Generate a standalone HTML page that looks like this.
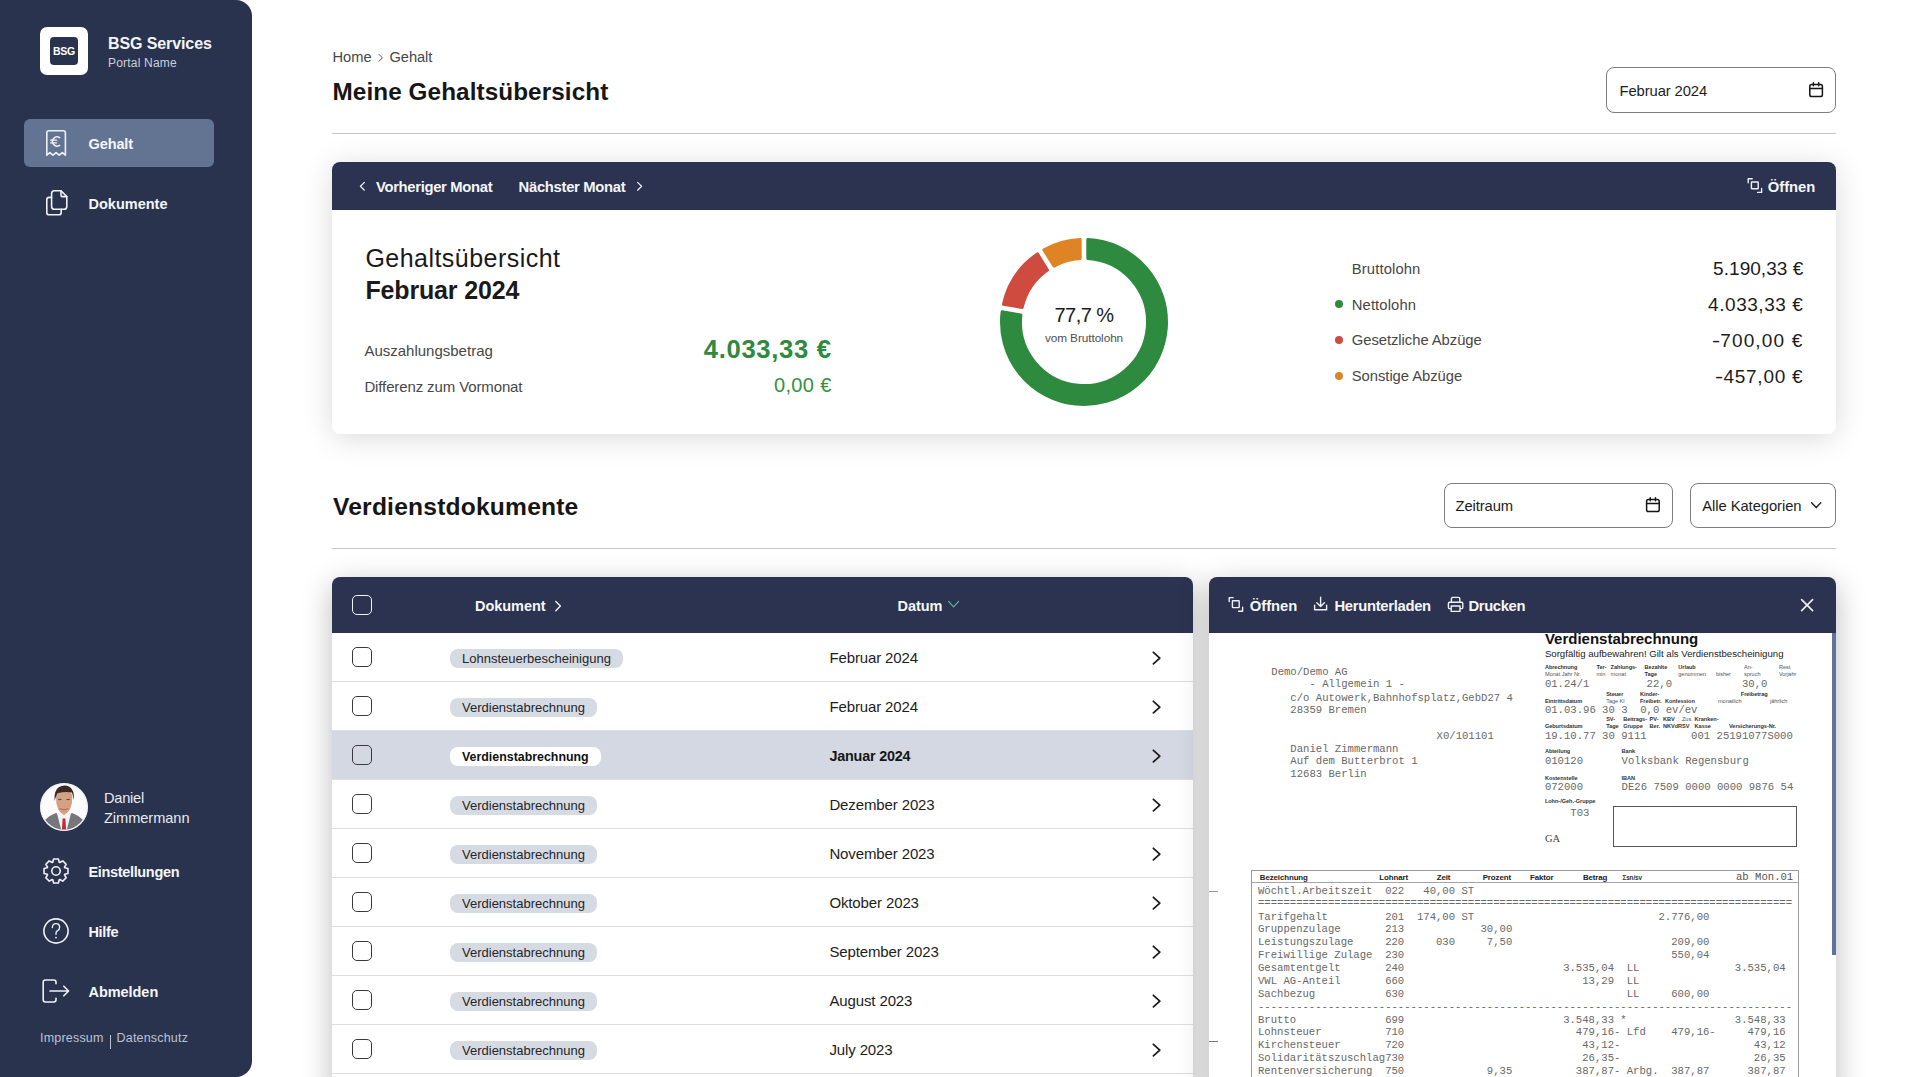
<!DOCTYPE html>
<html lang="de">
<head>
<meta charset="utf-8">
<title>Meine Gehaltsübersicht</title>
<style>
*{box-sizing:border-box;margin:0;padding:0}
html,body{width:1912px;height:1077px;overflow:hidden;background:#fff}
body{font-family:"Liberation Sans",sans-serif;position:relative;color:#1d1d1d}
.a{position:absolute;white-space:nowrap;line-height:1}
svg{position:absolute;overflow:visible}
#side{position:absolute;left:0;top:0;width:252px;height:1077px;background:#2a334e;border-radius:0 16px 16px 0}
.wt{color:#f2f4f8}
.nav{font-weight:700;font-size:14.5px;color:#f4f6fa}
.dark{background:#2b3350}
.card{position:absolute;background:#fff;border-radius:8px;box-shadow:0 4px 22px rgba(0,0,0,.09)}
.input{position:absolute;border:1px solid #7d7d7d;border-radius:8px;background:#fff}
.hr{position:absolute;height:1px;background:#c6c6c6}
.row{position:absolute;left:332px;width:861px;height:49px;border-bottom:1px solid #dedede;background:#fff}
.cb{position:absolute;width:20px;height:20px;border:1.5px solid #3a3a3a;border-radius:5px;background:#fff}
.badge{position:absolute;height:19px;border-radius:8px;background:#d6dae3;font-size:13px;line-height:19px;padding:0 12px;color:#262626}
.mono{font-family:"Liberation Mono",monospace;font-size:10.53px;color:#4a4a4a;white-space:pre;line-height:1;position:absolute}
.lbl{font-family:"Liberation Sans",sans-serif;font-weight:700;font-size:6px;color:#222;position:absolute;white-space:nowrap;line-height:1;letter-spacing:-.1px}
</style>
</head>
<body>
<!-- SIDEBAR -->
<div id="side"></div>
<div class="a" style="left:40px;top:27px;width:48px;height:48px;background:#fff;border-radius:7px"></div>
<div class="a" style="left:50px;top:37px;width:28px;height:28px;background:#2a334e;border-radius:4px;color:#fff;font-weight:700;font-size:10.5px;line-height:28px;text-align:center;letter-spacing:-.2px">BSG</div>
<div class="a wt" style="left:108px;top:36.1px;font-size:16px;font-weight:700;letter-spacing:-.1px">BSG Services</div>
<div class="a" style="left:108px;top:56.6px;font-size:12px;color:#c9d0dd;letter-spacing:.2px">Portal Name</div>

<div class="a" style="left:24px;top:119px;width:190px;height:48px;background:#637492;border-radius:6px"></div>
<div class="a nav" style="left:88.5px;top:136.7px;letter-spacing:-.1px">Gehalt</div>
<div class="a nav" style="left:88.5px;top:196.7px">Dokumente</div>


<!-- nav icons -->
<svg style="left:0;top:0" width="252" height="260" viewBox="0 0 252 260" fill="none" stroke="#eef1f6" stroke-width="1.6" stroke-linejoin="round" stroke-linecap="round">
  <path d="M46.8 155.2 V133 Q46.8 130.8 49 130.8 H63.2 Q65.4 130.8 65.4 133 V155.2 L62.3 152.6 L59.2 155.2 L56.1 152.6 L53 155.2 L49.9 152.6 Z"/>
  <path d="M59.6 137.6 A4.6 4.6 0 1 0 59.6 145.4" />
  <path d="M50.6 140.2 H56.6 M50.6 142.8 H56.6" stroke-width="1.3"/>
  <path d="M51.4 197.4 H49.2 Q46.8 197.4 46.8 199.8 V212.4 Q46.8 214.8 49.2 214.8 H58.8 Q61.2 214.8 61.2 212.4 V209.2" />
  <path d="M54.4 190.8 H61 L66.8 196.6 V206.4 Q66.8 209.2 64 209.2 H54.4 Q51.6 209.2 51.6 206.4 V193.6 Q51.6 190.8 54.4 190.8 Z"/>
  <path d="M61 190.8 V195.2 Q61 196.6 62.4 196.6 H66.8"/>
</svg>
<div class="a" style="left:40px;top:783px;width:48px;height:48px;border-radius:50%;background:#fff"></div>
<svg style="left:0;top:0" width="1" height="1">
  <defs><clipPath id="av"><circle cx="64" cy="807" r="22.6"/></clipPath></defs>
  <circle cx="64" cy="807" r="23.2" fill="none" stroke="#dfe4ee" stroke-width=".8"/>
  <g clip-path="url(#av)">
    <rect x="40" y="783" width="48" height="48" fill="#fbfbfb"/>
    <path d="M43 831 L45 820 Q49 815.5 56 813 L64 817 L72 813 Q79 815.5 83 820 L85 831 Z" fill="#77767a"/>
    <path d="M57 813.2 L61.5 831 H66.5 L71 813.2 L68 812 H60 Z" fill="#f4f2f2"/>
    <path d="M62.6 818.6 H65.4 L66.2 831 H61.8 Z" fill="#b8313a"/>
    <path d="M56 797 Q55.6 811 64 815 Q72.4 811 72.4 797 Q72 790 64 790 Q56 790 56 797 Z" fill="#d4a184"/>
    <path d="M54.6 801 Q53.4 786.5 64.4 785.6 Q75 786 73.8 800.5 Q72.8 794.4 71.8 792.6 Q66 791.4 57.4 793.2 Q56 796 54.6 801 Z" fill="#3a2a23"/>
    <path d="M59.8 808.6 Q64 811 68.2 808.6" fill="none" stroke="#9e6a55" stroke-width=".9"/>
    <path d="M58.2 799.6 H61.4 M66.6 799.6 H69.8" stroke="#5a3b2e" stroke-width="1"/>
  </g>
</svg>
<div class="a" style="left:104px;top:791.1px;font-size:14.6px;color:#e6eaf2;letter-spacing:-.25px">Daniel</div>
<div class="a" style="left:104px;top:811.1px;font-size:14.6px;color:#e6eaf2;letter-spacing:-.05px">Zimmermann</div>

<svg style="left:0;top:840" width="252" height="180" viewBox="0 840 252 180" fill="none" stroke="#eef1f6" stroke-width="1.6" stroke-linejoin="round" stroke-linecap="round">
  <path d="M64.70 867.72 L67.96 868.58 L67.96 873.42 L64.70 874.28 L64.47 874.84 L66.17 877.74 L62.74 881.17 L59.84 879.47 L59.28 879.70 L58.42 882.96 L53.58 882.96 L52.72 879.70 L52.16 879.47 L49.26 881.17 L45.83 877.74 L47.53 874.84 L47.30 874.28 L44.04 873.42 L44.04 868.58 L47.30 867.72 L47.53 867.16 L45.83 864.26 L49.26 860.83 L52.16 862.53 L52.72 862.30 L53.58 859.04 L58.42 859.04 L59.28 862.30 L59.84 862.53 L62.74 860.83 L66.17 864.26 L64.47 867.16 Z"/>
  <circle cx="56" cy="871" r="4.2"/>
  <circle cx="56" cy="931" r="12.1"/>
  <path d="M52.4 927.6 Q52.4 923.6 56 923.6 Q59.6 923.6 59.6 927.2 Q59.6 929.6 57.6 930.6 Q56 931.4 56 933.4 V934.2" stroke-width="1.4"/>
  <circle cx="56" cy="937.6" r=".9" fill="#eef1f6" stroke="none"/>
  <path d="M56 983.8 V982.2 Q56 980 53.8 980 H45.4 Q43.2 980 43.2 982.2 V999.8 Q43.2 1002 45.4 1002 H53.8 Q56 1002 56 999.8 V998.2"/>
  <path d="M50 991 H68.6 M63.8 986.2 L68.6 991 L63.8 995.8"/>
</svg>
<div class="a nav" style="left:88.5px;top:864.6px;letter-spacing:-.34px">Einstellungen</div>
<div class="a nav" style="left:88.5px;top:924.6px;letter-spacing:-.35px">Hilfe</div>
<div class="a nav" style="left:88.5px;top:984.6px;letter-spacing:-.05px">Abmelden</div>
<div class="a" style="left:40px;top:1032.4px;font-size:12.5px;color:#bcc3d2;letter-spacing:.2px">Impressum</div>
<div class="a" style="left:109.6px;top:1035px;width:1.2px;height:14px;background:#bcc3d2"></div>
<div class="a" style="left:116.6px;top:1032.4px;font-size:12.5px;color:#bcc3d2;letter-spacing:.18px">Datenschutz</div>


<!-- MAIN HEADER -->
<div class="a" style="left:332.5px;top:50.3px;font-size:14.7px;color:#474747">Home</div>
<svg style="left:0;top:0" width="1" height="1"><path d="M379 54.4 L382.4 57.8 L379 61.2" fill="none" stroke="#555" stroke-width="1" stroke-linecap="round" stroke-linejoin="round"/></svg>
<div class="a" style="left:389.4px;top:50.3px;font-size:14.7px;color:#474747;letter-spacing:-.05px">Gehalt</div>
<div class="a" style="left:332.5px;top:79.7px;font-size:24.3px;font-weight:700;color:#161616;letter-spacing:.08px">Meine Gehaltsübersicht</div>
<div class="input" style="left:1606px;top:67px;width:230px;height:46px"></div>
<div class="a" style="left:1619.6px;top:83.5px;font-size:14.8px;color:#1d1d1d;letter-spacing:-.12px">Februar 2024</div>
<svg style="left:0;top:0" width="1" height="1" fill="none" stroke="#161616" stroke-width="1.5" stroke-linecap="round" stroke-linejoin="round">
  <rect x="1809.8" y="84.6" width="12.6" height="12" rx="1.8"/>
  <path d="M1809.8 88.6 H1822.4 M1813.4 82.8 V85.8 M1818.7 82.8 V85.8"/>
</svg>
<div class="hr" style="left:332px;top:133px;width:1504px"></div>

<!-- SUMMARY CARD -->
<div class="card" style="box-shadow:0 4px 30px rgba(0,0,0,.15);left:332px;top:162px;width:1504px;height:272px;overflow:hidden">
  <div class="dark" style="position:absolute;left:0;top:0;width:100%;height:48px"></div>
</div>
<svg style="left:0;top:0" width="1" height="1" fill="none" stroke="#eef1f6" stroke-width="1.4" stroke-linecap="round" stroke-linejoin="round">
  <path d="M364.4 182.4 L360.4 186.3 L364.4 190.2" stroke-width="1.2"/>
  <path d="M637.6 182.4 L641.6 186.3 L637.6 190.2" stroke-width="1.2"/>
  <path d="M1752.2 178.8 H1748.2 V182.8 M1757.6 192.4 H1761.6 V188.4"/>
  <rect x="1751.4" y="182" width="6.8" height="6.8" rx="0.6"/>
</svg>
<div class="a nav" style="left:376px;top:179.8px;font-size:14.8px;letter-spacing:-.32px">Vorheriger Monat</div>
<div class="a nav" style="left:518.6px;top:179.8px;font-size:14.8px;letter-spacing:-.3px">Nächster Monat</div>
<div class="a nav" style="left:1767.8px;top:179.8px;font-size:14.8px;letter-spacing:-.05px">Öffnen</div>

<div class="a" style="left:365.4px;top:246.4px;font-size:25px;color:#1a1a1a;letter-spacing:.47px">Gehaltsübersicht</div>
<div class="a" style="left:365.4px;top:278.2px;font-size:25px;font-weight:700;color:#1a1a1a;letter-spacing:-.15px">Februar 2024</div>
<div class="a" style="left:364.4px;top:342.9px;font-size:15px;color:#474747">Auszahlungsbetrag</div>
<div class="a" style="left:364.4px;top:378.8px;font-size:15px;color:#474747;letter-spacing:-.12px">Differenz zum Vormonat</div>
<div class="a" style="left:601.7px;width:230px;text-align:right;top:337px;font-size:25.6px;font-weight:700;color:#2e8a3e;letter-spacing:.7px">4.033,33 €</div>
<div class="a" style="left:631.7px;width:200px;text-align:right;top:374.5px;font-size:20px;color:#34923f;letter-spacing:.35px">0,00 €</div>

<!-- donut -->
<svg id="donut" style="left:0;top:0" width="1" height="1"><path d="M1087.80 239.59 A82.5 82.5 0 1 1 1002.13 311.79 L1020.89 315.01 A63.5 63.5 0 1 0 1087.80 258.61 Z" fill="#2e8a3e" stroke="#2e8a3e" stroke-width="3.0" stroke-linejoin="round"/><path d="M1003.42 304.30 A82.5 82.5 0 0 1 1037.47 253.88 L1047.46 270.06 A63.5 63.5 0 0 0 1022.17 307.52 Z" fill="#cf4a3f" stroke="#cf4a3f" stroke-width="3.0" stroke-linejoin="round"/><path d="M1043.93 249.88 A82.5 82.5 0 0 1 1080.20 239.59 L1080.20 258.61 A63.5 63.5 0 0 0 1053.93 266.07 Z" fill="#de8424" stroke="#de8424" stroke-width="3.0" stroke-linejoin="round"/></svg>
<div class="a" style="left:984px;width:200px;text-align:center;top:304.8px;font-size:20px;color:#1a1a1a;letter-spacing:-.55px">77,7 %</div>
<div class="a" style="left:984px;width:200px;text-align:center;top:332.9px;font-size:11.8px;color:#4f4f4f;letter-spacing:-.08px">vom Bruttolohn</div>

<!-- legend -->
<div class="a" style="left:1335px;top:300px;width:8px;height:8px;border-radius:50%;background:#2e8a3e"></div>
<div class="a" style="left:1335px;top:336.3px;width:8px;height:8px;border-radius:50%;background:#cf4a3f"></div>
<div class="a" style="left:1335px;top:372px;width:8px;height:8px;border-radius:50%;background:#de8424"></div>
<div class="a" style="left:1351.8px;top:261.5px;font-size:14.8px;color:#474747;letter-spacing:.12px">Bruttolohn</div>
<div class="a" style="left:1351.8px;top:297.5px;font-size:14.8px;color:#474747;letter-spacing:.1px">Nettolohn</div>
<div class="a" style="left:1351.8px;top:333.3px;font-size:14.8px;color:#474747;letter-spacing:-.05px">Gesetzliche Abzüge</div>
<div class="a" style="left:1351.8px;top:369.1px;font-size:14.8px;color:#474747;letter-spacing:-.05px">Sonstige Abzüge</div>
<div class="a" style="left:1603.4px;width:200px;text-align:right;top:259.2px;font-size:19px;color:#1c1c1c;letter-spacing:.05px">5.190,33 €</div>
<div class="a" style="left:1603.4px;width:200px;text-align:right;top:295.2px;font-size:19px;color:#1c1c1c;letter-spacing:.55px">4.033,33 €</div>
<div class="a" style="left:1603.4px;width:200px;text-align:right;top:331.2px;font-size:19px;color:#1c1c1c;letter-spacing:1.15px"><span style="display:inline-block;transform:scaleX(1.3)">-</span>700,00 €</div>
<div class="a" style="left:1603.4px;width:200px;text-align:right;top:367.2px;font-size:19px;color:#1c1c1c;letter-spacing:.75px"><span style="display:inline-block;transform:scaleX(1.3)">-</span>457,00 €</div>


<!-- SECTION 2 -->
<div class="a" style="left:333px;top:494.5px;font-size:24.6px;font-weight:700;color:#161616;letter-spacing:.2px">Verdienstdokumente</div>
<div class="input" style="left:1443.5px;top:482.5px;width:229px;height:45px"></div>
<div class="a" style="left:1455.5px;top:498.7px;font-size:14.8px;color:#1d1d1d;letter-spacing:-.1px">Zeitraum</div>
<svg style="left:0;top:0" width="1" height="1" fill="none" stroke="#161616" stroke-width="1.5" stroke-linecap="round" stroke-linejoin="round">
  <rect x="1646.6" y="499.6" width="12.6" height="12" rx="1.8"/>
  <path d="M1646.6 503.6 H1659.2 M1650.2 497.8 V500.8 M1655.5 497.8 V500.8"/>
</svg>
<div class="input" style="left:1689.5px;top:482.5px;width:146.5px;height:45px"></div>
<div class="a" style="left:1702.3px;top:498.7px;font-size:14.8px;color:#1d1d1d;letter-spacing:-.08px">Alle Kategorien</div>
<svg style="left:0;top:0" width="1" height="1"><path d="M1811.6 502.8 L1816.2 507.6 L1820.8 502.8" fill="none" stroke="#2a2a2a" stroke-width="1.5" stroke-linecap="round" stroke-linejoin="round"/></svg>
<div class="hr" style="left:332px;top:548px;width:1504px"></div>

<!-- TABLE -->
<div class="card" style="box-shadow:0 8px 30px rgba(0,0,0,.27);left:332px;top:577px;width:861px;height:520px;border-radius:8px 8px 0 0;overflow:hidden">
  <div class="dark" style="position:absolute;left:0;top:0;width:100%;height:56px"></div>
</div>
<div class="cb" style="left:352px;top:595px;border-color:#f2f4f8;background:transparent"></div>
<div class="a nav" style="left:475px;top:598.7px;font-size:14.5px;letter-spacing:-.05px">Dokument</div>
<div class="a nav" style="left:897.6px;top:598.7px;font-size:14.5px;letter-spacing:-.1px">Datum</div>
<svg style="left:0;top:0" width="1" height="1" fill="none" stroke-width="1.4" stroke-linecap="round" stroke-linejoin="round">
  <path d="M555.8 601.4 L560.4 606.1 L555.8 610.8" stroke="#eef1f6"/>
  <path d="M948.6 601.4 L953.6 606.8 L958.6 601.4" stroke="#62b9a4" stroke-width="1.15"/>
</svg>
<div class="row" style="top:633px;height:49px;background:#fff"></div>
<div class="cb" style="left:352px;top:646.5px;"></div>
<div class="badge" style="left:450px;top:649px">Lohnsteuerbescheinigung</div>
<div class="a" style="left:829.4px;top:650.3px;font-size:15px;color:#1d1d1d;letter-spacing:-.12px">Februar 2024</div>
<svg style="left:0;top:0" width="1" height="1"><path d="M1153.4 652.3 L1159.8 658.1 L1153.4 663.9" fill="none" stroke="#1d1d1d" stroke-width="1.8" stroke-linecap="round" stroke-linejoin="round"/></svg>
<div class="row" style="top:682px;height:49px;background:#fff"></div>
<div class="cb" style="left:352px;top:695.5px;"></div>
<div class="badge" style="left:450px;top:698px">Verdienstabrechnung</div>
<div class="a" style="left:829.4px;top:699.3px;font-size:15px;color:#1d1d1d;letter-spacing:-.12px">Februar 2024</div>
<svg style="left:0;top:0" width="1" height="1"><path d="M1153.4 701.3 L1159.8 707.1 L1153.4 712.9" fill="none" stroke="#1d1d1d" stroke-width="1.8" stroke-linecap="round" stroke-linejoin="round"/></svg>
<div class="row" style="top:731px;height:49px;background:#d3d8e2"></div>
<div class="cb" style="left:352px;top:744.5px;background:transparent;"></div>
<div class="badge" style="left:450px;top:747px;background:#fff;font-weight:700;font-size:12.4px;line-height:20.6px;color:#111;padding:0 12px 0 12px">Verdienstabrechnung</div>
<div class="a" style="left:829.4px;top:749.2px;font-size:14.4px;font-weight:700;color:#161616;letter-spacing:-.2px">Januar 2024</div>
<svg style="left:0;top:0" width="1" height="1"><path d="M1153.4 750.3 L1159.8 756.1 L1153.4 761.9" fill="none" stroke="#1d1d1d" stroke-width="1.8" stroke-linecap="round" stroke-linejoin="round"/></svg>
<div class="row" style="top:780px;height:49px;background:#fff"></div>
<div class="cb" style="left:352px;top:793.5px;"></div>
<div class="badge" style="left:450px;top:796px">Verdienstabrechnung</div>
<div class="a" style="left:829.4px;top:797.3px;font-size:15px;color:#1d1d1d;letter-spacing:-.12px">Dezember 2023</div>
<svg style="left:0;top:0" width="1" height="1"><path d="M1153.4 799.3 L1159.8 805.1 L1153.4 810.9" fill="none" stroke="#1d1d1d" stroke-width="1.8" stroke-linecap="round" stroke-linejoin="round"/></svg>
<div class="row" style="top:829px;height:49px;background:#fff"></div>
<div class="cb" style="left:352px;top:842.5px;"></div>
<div class="badge" style="left:450px;top:845px">Verdienstabrechnung</div>
<div class="a" style="left:829.4px;top:846.3px;font-size:15px;color:#1d1d1d;letter-spacing:-.12px">November 2023</div>
<svg style="left:0;top:0" width="1" height="1"><path d="M1153.4 848.3 L1159.8 854.1 L1153.4 859.9" fill="none" stroke="#1d1d1d" stroke-width="1.8" stroke-linecap="round" stroke-linejoin="round"/></svg>
<div class="row" style="top:878px;height:49px;background:#fff"></div>
<div class="cb" style="left:352px;top:891.5px;"></div>
<div class="badge" style="left:450px;top:894px">Verdienstabrechnung</div>
<div class="a" style="left:829.4px;top:895.3px;font-size:15px;color:#1d1d1d;letter-spacing:-.12px">Oktober 2023</div>
<svg style="left:0;top:0" width="1" height="1"><path d="M1153.4 897.3 L1159.8 903.1 L1153.4 908.9" fill="none" stroke="#1d1d1d" stroke-width="1.8" stroke-linecap="round" stroke-linejoin="round"/></svg>
<div class="row" style="top:927px;height:49px;background:#fff"></div>
<div class="cb" style="left:352px;top:940.5px;"></div>
<div class="badge" style="left:450px;top:943px">Verdienstabrechnung</div>
<div class="a" style="left:829.4px;top:944.3px;font-size:15px;color:#1d1d1d;letter-spacing:-.12px">September 2023</div>
<svg style="left:0;top:0" width="1" height="1"><path d="M1153.4 946.3 L1159.8 952.1 L1153.4 957.9" fill="none" stroke="#1d1d1d" stroke-width="1.8" stroke-linecap="round" stroke-linejoin="round"/></svg>
<div class="row" style="top:976px;height:49px;background:#fff"></div>
<div class="cb" style="left:352px;top:989.5px;"></div>
<div class="badge" style="left:450px;top:992px">Verdienstabrechnung</div>
<div class="a" style="left:829.4px;top:993.3px;font-size:15px;color:#1d1d1d;letter-spacing:-.12px">August 2023</div>
<svg style="left:0;top:0" width="1" height="1"><path d="M1153.4 995.3 L1159.8 1001.1 L1153.4 1006.9" fill="none" stroke="#1d1d1d" stroke-width="1.8" stroke-linecap="round" stroke-linejoin="round"/></svg>
<div class="row" style="top:1025px;height:49px;background:#fff"></div>
<div class="cb" style="left:352px;top:1038.5px;"></div>
<div class="badge" style="left:450px;top:1041px">Verdienstabrechnung</div>
<div class="a" style="left:829.4px;top:1042.3px;font-size:15px;color:#1d1d1d;letter-spacing:-.12px">July 2023</div>
<svg style="left:0;top:0" width="1" height="1"><path d="M1153.4 1044.3 L1159.8 1050.1 L1153.4 1055.9" fill="none" stroke="#1d1d1d" stroke-width="1.8" stroke-linecap="round" stroke-linejoin="round"/></svg>
<div class="row" style="top:1074px;height:49px;background:#fff"></div>
<div class="cb" style="left:352px;top:1087.5px;"></div>
<div class="badge" style="left:450px;top:1090px">Verdienstabrechnung</div>
<div class="a" style="left:829.4px;top:1091.3px;font-size:15px;color:#1d1d1d;letter-spacing:-.12px">Juni 2023</div>
<svg style="left:0;top:0" width="1" height="1"><path d="M1153.4 1093.3 L1159.8 1099.1 L1153.4 1104.9" fill="none" stroke="#1d1d1d" stroke-width="1.8" stroke-linecap="round" stroke-linejoin="round"/></svg>

<!-- PREVIEW PANEL -->
<div class="card" style="box-shadow:0 8px 30px rgba(0,0,0,.27);left:1209px;top:577px;width:627px;height:520px;border-radius:8px 8px 0 0;overflow:hidden">
  <div class="dark" style="position:absolute;left:0;top:0;width:100%;height:56px"></div>
  <div style="position:absolute;left:623px;top:56px;width:4px;height:322px;background:#62729a"></div>
</div>
<svg style="left:0;top:0" width="1" height="1" fill="none" stroke="#eef1f6" stroke-width="1.4" stroke-linecap="round" stroke-linejoin="round">
  <path d="M1233.2 597.6 H1229.2 V601.6 M1238.6 611.2 H1242.6 V607.2"/>
  <rect x="1232.4" y="600.8" width="6.8" height="6.8" rx="0.6"/>
  <path d="M1320.6 597.2 V606.4 M1316.8 602.8 L1320.6 606.6 L1324.4 602.8 M1314.6 605.2 V609.8 H1326.6 V605.2"/>
  <path d="M1451.4 602.2 V598.8 Q1451.4 597.4 1452.8 597.4 H1458.4 Q1459.8 597.4 1459.8 598.8 V602.2 M1451.2 608.6 H1449.6 Q1448.4 608.6 1448.4 607.4 V603.4 Q1448.4 602.2 1449.6 602.2 H1461.6 Q1462.8 602.2 1462.8 603.4 V607.4 Q1462.8 608.6 1461.6 608.6 H1460 M1451.2 606 H1460 V611.4 H1451.2 Z"/>
  <path d="M1801.6 599.6 L1812.6 610.6 M1812.6 599.6 L1801.6 610.6" stroke-width="1.6"/>
</svg>
<div class="a nav" style="left:1249.8px;top:598.6px;font-size:14.8px;letter-spacing:-.05px">Öffnen</div>
<div class="a nav" style="left:1334.4px;top:598.6px;font-size:14.8px;letter-spacing:-.3px">Herunterladen</div>
<div class="a nav" style="left:1468.4px;top:598.6px;font-size:14.8px;letter-spacing:-.35px">Drucken</div>
<div id="doc"></div>
<div id="docwrap" style="position:absolute;left:0;top:0;width:1912px;height:1077px;clip-path:inset(633px 80px 0 1209px)"><div class="mono" style="left:1271.3px;top:666.8px;font-size:10.6px;color:#686868">Demo/Demo AG</div>
<div class="mono" style="left:1271.3px;top:679.3px;font-size:10.6px;color:#686868">      - Allgemein 1 -</div>
<div class="mono" style="left:1271.3px;top:692.5px;font-size:10.6px;color:#686868">   c/o Autowerk,Bahnhofsplatz,GebD27 4</div>
<div class="mono" style="left:1271.3px;top:704.8px;font-size:10.6px;color:#686868">   28359 Bremen</div>
<div class="mono" style="left:1271.3px;top:731.1px;font-size:10.6px;color:#686868">                          X0/101101</div>
<div class="mono" style="left:1271.3px;top:743.8px;font-size:10.6px;color:#686868">   Daniel Zimmermann</div>
<div class="mono" style="left:1271.3px;top:756.3px;font-size:10.6px;color:#686868">   Auf dem Butterbrot 1</div>
<div class="mono" style="left:1271.3px;top:769.1px;font-size:10.6px;color:#686868">   12683 Berlin</div>
<div class="a" style="left:1544.9px;top:631.1px;font-family:'Liberation Sans';font-size:15px;font-weight:700;color:#111;letter-spacing:0px">Verdienstabrechnung</div>
<div class="a" style="left:1544.9px;top:648.6px;font-family:'Liberation Sans';font-size:9.63px;font-weight:400;color:#222;letter-spacing:0px">Sorgfältig aufbewahren! Gilt als Verdienstbescheinigung</div>
<div class="a" style="left:1544.9px;top:665.1px;font-family:'Liberation Sans';font-size:5.6px;font-weight:700;color:#333;letter-spacing:-0.05px">Abrechnung</div>
<div class="a" style="left:1544.9px;top:672.0px;font-family:'Liberation Sans';font-size:5.6px;font-weight:400;color:#555;letter-spacing:-0.05px">Monat   Jahr    Nr.</div>
<div class="a" style="left:1596.5px;top:665.1px;font-family:'Liberation Sans';font-size:5.6px;font-weight:700;color:#333;letter-spacing:-0.05px">Ter-</div>
<div class="a" style="left:1596.5px;top:672.0px;font-family:'Liberation Sans';font-size:5.6px;font-weight:400;color:#555;letter-spacing:-0.05px">min</div>
<div class="a" style="left:1610.6px;top:665.1px;font-family:'Liberation Sans';font-size:5.6px;font-weight:700;color:#333;letter-spacing:-0.05px">Zahlungs-</div>
<div class="a" style="left:1610.6px;top:672.0px;font-family:'Liberation Sans';font-size:5.6px;font-weight:400;color:#555;letter-spacing:-0.05px">monat</div>
<div class="a" style="left:1644.6px;top:665.1px;font-family:'Liberation Sans';font-size:5.6px;font-weight:700;color:#333;letter-spacing:-0.05px">Bezahlte</div>
<div class="a" style="left:1644.6px;top:672.0px;font-family:'Liberation Sans';font-size:5.6px;font-weight:700;color:#333;letter-spacing:-0.05px">Tage</div>
<div class="a" style="left:1678.3px;top:665.1px;font-family:'Liberation Sans';font-size:5.6px;font-weight:700;color:#333;letter-spacing:-0.05px">Urlaub</div>
<div class="a" style="left:1678.3px;top:672.0px;font-family:'Liberation Sans';font-size:5.6px;font-weight:400;color:#555;letter-spacing:-0.05px">genommen</div>
<div class="a" style="left:1716.0px;top:672.0px;font-family:'Liberation Sans';font-size:5.6px;font-weight:400;color:#555;letter-spacing:-0.05px">bisher</div>
<div class="a" style="left:1744.0px;top:665.1px;font-family:'Liberation Sans';font-size:5.6px;font-weight:400;color:#555;letter-spacing:-0.05px">An-</div>
<div class="a" style="left:1744.0px;top:672.0px;font-family:'Liberation Sans';font-size:5.6px;font-weight:400;color:#555;letter-spacing:-0.05px">spruch</div>
<div class="a" style="left:1778.9px;top:665.1px;font-family:'Liberation Sans';font-size:5.6px;font-weight:400;color:#555;letter-spacing:-0.05px">Rest</div>
<div class="a" style="left:1778.9px;top:672.0px;font-family:'Liberation Sans';font-size:5.6px;font-weight:400;color:#555;letter-spacing:-0.05px">Vorjahr</div>
<div class="mono" style="left:1544.9px;top:678.6px;font-size:10.6px;color:#686868">01.24/1         22,0           30,0</div>
<div class="a" style="left:1606.2px;top:691.8px;font-family:'Liberation Sans';font-size:5.6px;font-weight:700;color:#333;letter-spacing:-0.05px">Steuer</div>
<div class="a" style="left:1640.0px;top:691.8px;font-family:'Liberation Sans';font-size:5.6px;font-weight:700;color:#333;letter-spacing:-0.05px">Kinder-</div>
<div class="a" style="left:1740.8px;top:691.8px;font-family:'Liberation Sans';font-size:5.6px;font-weight:700;color:#333;letter-spacing:-0.05px">Freibetrag</div>
<div class="a" style="left:1544.9px;top:698.6px;font-family:'Liberation Sans';font-size:5.6px;font-weight:700;color:#333;letter-spacing:-0.05px">Eintrittsdatum</div>
<div class="a" style="left:1606.2px;top:698.6px;font-family:'Liberation Sans';font-size:5.6px;font-weight:400;color:#555;letter-spacing:-0.05px">Tage  Kl</div>
<div class="a" style="left:1640.0px;top:698.6px;font-family:'Liberation Sans';font-size:5.6px;font-weight:700;color:#333;letter-spacing:-0.05px">Freibetr.</div>
<div class="a" style="left:1664.9px;top:698.6px;font-family:'Liberation Sans';font-size:5.6px;font-weight:700;color:#333;letter-spacing:-0.05px">Konfession</div>
<div class="a" style="left:1718.0px;top:698.6px;font-family:'Liberation Sans';font-size:5.6px;font-weight:400;color:#555;letter-spacing:-0.05px">monatlich</div>
<div class="a" style="left:1770.0px;top:698.6px;font-family:'Liberation Sans';font-size:5.6px;font-weight:400;color:#555;letter-spacing:-0.05px">jährlich</div>
<div class="mono" style="left:1544.9px;top:705.4px;font-size:10.6px;color:#686868">01.03.96 30 3  0,0 ev/ev</div>
<div class="a" style="left:1606.2px;top:717.1px;font-family:'Liberation Sans';font-size:5.6px;font-weight:700;color:#333;letter-spacing:-0.05px">SV-</div>
<div class="a" style="left:1623.2px;top:717.1px;font-family:'Liberation Sans';font-size:5.6px;font-weight:700;color:#333;letter-spacing:-0.05px">Beitrags-</div>
<div class="a" style="left:1649.6px;top:717.1px;font-family:'Liberation Sans';font-size:5.6px;font-weight:700;color:#333;letter-spacing:-0.05px">PV-</div>
<div class="a" style="left:1663.0px;top:717.1px;font-family:'Liberation Sans';font-size:5.6px;font-weight:700;color:#333;letter-spacing:-0.05px">KBV</div>
<div class="a" style="left:1682.0px;top:717.1px;font-family:'Liberation Sans';font-size:5.6px;font-weight:400;color:#555;letter-spacing:-0.05px">Zus.</div>
<div class="a" style="left:1694.6px;top:717.1px;font-family:'Liberation Sans';font-size:5.6px;font-weight:700;color:#333;letter-spacing:-0.05px">Kranken-</div>
<div class="a" style="left:1544.9px;top:723.9px;font-family:'Liberation Sans';font-size:5.6px;font-weight:700;color:#333;letter-spacing:-0.05px">Geburtsdatum</div>
<div class="a" style="left:1606.2px;top:723.9px;font-family:'Liberation Sans';font-size:5.6px;font-weight:700;color:#333;letter-spacing:-0.05px">Tage</div>
<div class="a" style="left:1623.2px;top:723.9px;font-family:'Liberation Sans';font-size:5.6px;font-weight:700;color:#333;letter-spacing:-0.05px">Gruppe</div>
<div class="a" style="left:1649.6px;top:723.9px;font-family:'Liberation Sans';font-size:5.6px;font-weight:700;color:#333;letter-spacing:-0.05px">Ber.</div>
<div class="a" style="left:1663.0px;top:723.9px;font-family:'Liberation Sans';font-size:5.6px;font-weight:700;color:#333;letter-spacing:-0.05px">NKVdR</div>
<div class="a" style="left:1682.0px;top:723.9px;font-family:'Liberation Sans';font-size:5.6px;font-weight:700;color:#333;letter-spacing:-0.05px">SV</div>
<div class="a" style="left:1694.6px;top:723.9px;font-family:'Liberation Sans';font-size:5.6px;font-weight:700;color:#333;letter-spacing:-0.05px">Kasse</div>
<div class="a" style="left:1729.0px;top:723.9px;font-family:'Liberation Sans';font-size:5.6px;font-weight:700;color:#333;letter-spacing:-0.05px">Versicherungs-Nr.</div>
<div class="mono" style="left:1544.9px;top:730.5px;font-size:10.6px;color:#686868">19.10.77 30 9111       001 25191077S000</div>
<div class="a" style="left:1544.9px;top:749.1px;font-family:'Liberation Sans';font-size:5.6px;font-weight:700;color:#333;letter-spacing:-0.05px">Abteilung</div>
<div class="a" style="left:1621.6px;top:749.1px;font-family:'Liberation Sans';font-size:5.6px;font-weight:700;color:#333;letter-spacing:-0.05px">Bank</div>
<div class="mono" style="left:1544.9px;top:756.2px;font-size:10.6px;color:#686868">010120</div>
<div class="mono" style="left:1621.6px;top:756.2px;font-size:10.6px;color:#686868">Volksbank Regensburg</div>
<div class="a" style="left:1544.9px;top:775.5px;font-family:'Liberation Sans';font-size:5.6px;font-weight:700;color:#333;letter-spacing:-0.05px">Kostenstelle</div>
<div class="a" style="left:1621.6px;top:775.5px;font-family:'Liberation Sans';font-size:5.6px;font-weight:700;color:#333;letter-spacing:-0.05px">IBAN</div>
<div class="mono" style="left:1544.9px;top:782.2px;font-size:10.6px;color:#686868">072000</div>
<div class="mono" style="left:1621.6px;top:782.2px;font-size:10.6px;color:#686868">DE26 7509 0000 0000 9876 54</div>
<div class="a" style="left:1544.9px;top:799.3px;font-family:'Liberation Sans';font-size:5.6px;font-weight:700;color:#333;letter-spacing:-0.05px">Lohn-/Geh.-Gruppe</div>
<div class="mono" style="left:1544.9px;top:808.1px;font-size:10.6px;color:#686868">    T03</div>
<div class="a" style="left:1544.9px;top:833.6px;font-family:'Liberation Serif';font-size:10.5px;font-weight:400;color:#444;letter-spacing:0px">GA</div>
<div class="a" style="left:1613.2px;top:806.1px;width:184px;height:41.4px;border:1.3px solid #555"></div>
<div class="a" style="left:1251.4px;top:870.3px;width:547.6px;height:260px;border:1.4px solid #9a9a9a"></div>
<div class="a" style="left:1251.4px;top:881.6px;width:547.6px;height:1.2px;background:#a5a5a5"></div>
<div class="a" style="left:1259.8px;top:873.5px;font-family:'Liberation Sans';font-size:7.9px;font-weight:700;color:#222;letter-spacing:-0.1px">Bezeichnung</div>
<div class="a" style="left:1379.3px;top:873.5px;font-family:'Liberation Sans';font-size:7.9px;font-weight:700;color:#222;letter-spacing:-0.1px">Lohnart</div>
<div class="a" style="left:1436.7px;top:873.5px;font-family:'Liberation Sans';font-size:7.9px;font-weight:700;color:#222;letter-spacing:-0.1px">Zeit</div>
<div class="a" style="left:1482.7px;top:873.5px;font-family:'Liberation Sans';font-size:7.9px;font-weight:700;color:#222;letter-spacing:-0.1px">Prozent</div>
<div class="a" style="left:1530.0px;top:873.5px;font-family:'Liberation Sans';font-size:7.9px;font-weight:700;color:#222;letter-spacing:-0.1px">Faktor</div>
<div class="a" style="left:1582.9px;top:873.5px;font-family:'Liberation Sans';font-size:7.9px;font-weight:700;color:#222;letter-spacing:-0.1px">Betrag</div>
<div class="a" style="left:1622.4px;top:874.8px;font-family:'Liberation Sans';font-size:6.4px;font-weight:700;color:#333;letter-spacing:-0.1px">Σsn/sv</div>
<div class="mono" style="left:1736.0px;top:872.3px;font-size:10.6px;color:#555">ab Mon.01</div>
<div class="mono" style="left:1258.0px;top:885.8px;font-size:10.6px;color:#686868">Wöchtl.Arbeitszeit  022   40,00 ST</div>
<div class="mono" style="left:1258.0px;top:898.2px;font-size:10.6px;color:#686868">====================================================================================</div>
<div class="mono" style="left:1258.0px;top:911.7px;font-size:10.6px;color:#686868">Tarifgehalt         201  174,00 ST                             2.776,00</div>
<div class="mono" style="left:1258.0px;top:924.3px;font-size:10.6px;color:#686868">Gruppenzulage       213            30,00</div>
<div class="mono" style="left:1258.0px;top:937.2px;font-size:10.6px;color:#686868">Leistungszulage     220     030     7,50                         209,00</div>
<div class="mono" style="left:1258.0px;top:950.0px;font-size:10.6px;color:#686868">Freiwillige Zulage  230                                          550,04</div>
<div class="mono" style="left:1258.0px;top:962.7px;font-size:10.6px;color:#686868">Gesamtentgelt       240                         3.535,04  LL               3.535,04</div>
<div class="mono" style="left:1258.0px;top:975.6px;font-size:10.6px;color:#686868">VWL AG-Anteil       660                            13,29  LL</div>
<div class="mono" style="left:1258.0px;top:988.5px;font-size:10.6px;color:#686868">Sachbezug           630                                   LL     600,00</div>
<div class="mono" style="left:1258.0px;top:1001.5px;font-size:10.6px;color:#686868">------------------------------------------------------------------------------------</div>
<div class="mono" style="left:1258.0px;top:1014.7px;font-size:10.6px;color:#686868">Brutto              699                         3.548,33 *                 3.548,33</div>
<div class="mono" style="left:1258.0px;top:1027.4px;font-size:10.6px;color:#686868">Lohnsteuer          710                           479,16- Lfd    479,16-     479,16</div>
<div class="mono" style="left:1258.0px;top:1040.3px;font-size:10.6px;color:#686868">Kirchensteuer       720                            43,12-                     43,12</div>
<div class="mono" style="left:1258.0px;top:1053.2px;font-size:10.6px;color:#686868">Solidaritätszuschlag730                            26,35-                     26,35</div>
<div class="mono" style="left:1258.0px;top:1066.0px;font-size:10.6px;color:#686868">Rentenversicherung  750             9,35          387,87- Arbg.  387,87      387,87</div>
<div class="mono" style="left:1258.0px;top:1078.9px;font-size:10.6px;color:#686868">Krankenversicherung 760</div>
<div class="a" style="left:1209px;top:890.5px;width:9px;height:1px;background:#9a9a9a"></div>
<div class="a" style="left:1209px;top:1040.5px;width:9px;height:1.2px;background:#777"></div></div><!--/docwrap-->

</body>
</html>
